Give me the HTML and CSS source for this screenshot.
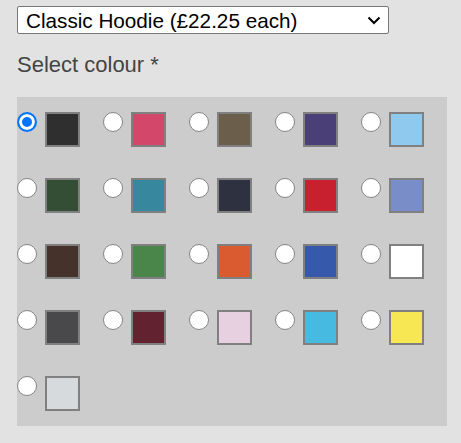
FILE: index.html
```html
<!DOCTYPE html>
<html lang="en">
<head>
<meta charset="utf-8">
<title>Select colour</title>
<link rel="stylesheet" href="styles.css">
</head>
<body>
<form class="product-form">
  <div class="select-wrap">
    <select class="product-select">
      <option>Classic Hoodie (£22.25 each)</option>
    </select>
    <svg class="chevron" width="14" height="9" viewBox="0 0 14 9" aria-hidden="true"><path d="M1.5 1.5 L7 7 L12.5 1.5" fill="none" stroke="#000" stroke-width="2"/></svg>
  </div>
  <p class="field-label">Select colour *</p>
  <div class="colour-grid">
    <label class="colour-item"><input type="radio" name="colour" checked><span class="swatch" style="background:#2f2f2f"></span></label>
    <label class="colour-item"><input type="radio" name="colour"><span class="swatch" style="background:#d3486a"></span></label>
    <label class="colour-item"><input type="radio" name="colour"><span class="swatch" style="background:#6b5e4a"></span></label>
    <label class="colour-item"><input type="radio" name="colour"><span class="swatch" style="background:#4b3f78"></span></label>
    <label class="colour-item"><input type="radio" name="colour"><span class="swatch" style="background:#8fc9ee"></span></label>

    <label class="colour-item"><input type="radio" name="colour"><span class="swatch" style="background:#344d35"></span></label>
    <label class="colour-item"><input type="radio" name="colour"><span class="swatch" style="background:#37889e"></span></label>
    <label class="colour-item"><input type="radio" name="colour"><span class="swatch" style="background:#2e3140"></span></label>
    <label class="colour-item"><input type="radio" name="colour"><span class="swatch" style="background:#c9202f"></span></label>
    <label class="colour-item"><input type="radio" name="colour"><span class="swatch" style="background:#798ec8"></span></label>

    <label class="colour-item"><input type="radio" name="colour"><span class="swatch" style="background:#45322a"></span></label>
    <label class="colour-item"><input type="radio" name="colour"><span class="swatch" style="background:#4a8549"></span></label>
    <label class="colour-item"><input type="radio" name="colour"><span class="swatch" style="background:#da5b2f"></span></label>
    <label class="colour-item"><input type="radio" name="colour"><span class="swatch" style="background:#3659ac"></span></label>
    <label class="colour-item"><input type="radio" name="colour"><span class="swatch" style="background:#ffffff"></span></label>

    <label class="colour-item"><input type="radio" name="colour"><span class="swatch" style="background:#49484b"></span></label>
    <label class="colour-item"><input type="radio" name="colour"><span class="swatch" style="background:#632230"></span></label>
    <label class="colour-item"><input type="radio" name="colour"><span class="swatch" style="background:#e7d1e1"></span></label>
    <label class="colour-item"><input type="radio" name="colour"><span class="swatch" style="background:#46bae0"></span></label>
    <label class="colour-item"><input type="radio" name="colour"><span class="swatch" style="background:#f7e752"></span></label>

    <label class="colour-item"><input type="radio" name="colour"><span class="swatch" style="background:#d6dadd"></span></label>
  </div>
</form>
</body>
</html>
```
FILE: styles.css
```css
html, body {
  margin: 0;
  padding: 0;
  background: #e2e2e2;
}

body {
  font-family: "Liberation Sans", Arial, sans-serif;
}

.product-form {
  padding: 6px 14px 0 17px;
}

.select-wrap {
  position: relative;
  width: 372px;
}

.product-select {
  appearance: none;
  -webkit-appearance: none;
  display: block;
  width: 372px;
  height: 28px;
  margin: 0;
  padding: 1px 30px 0 8px;
  border: 1px solid #767676;
  border-radius: 2px;
  background: #ffffff;
  color: #000;
  font-family: "Liberation Sans", Arial, sans-serif;
  font-size: 20.7px;
  line-height: 25px;
}

.chevron {
  position: absolute;
  right: 8px;
  top: 10px;
  pointer-events: none;
}

.field-label {
  margin: 18px 0 20px;
  font-size: 22px;
  line-height: 25px;
  color: #444;
}

.colour-grid {
  display: grid;
  grid-template-columns: repeat(5, 86px);
  row-gap: 31px;
  padding: 15px 0;
  width: 430px;
  background: #cccccc;
}

.colour-item {
  display: flex;
  align-items: flex-start;
  gap: 8px;
}

.colour-item input {
  appearance: none;
  -webkit-appearance: none;
  box-sizing: border-box;
  width: 20px;
  height: 20px;
  margin: 0;
  border: 1px solid #858585;
  border-radius: 50%;
  background: #fff;
}

.colour-item input:checked {
  border: 2px solid #0075ff;
  background: #0075ff;
  box-shadow: inset 0 0 0 3px #fff;
}

.swatch {
  box-sizing: border-box;
  width: 35px;
  height: 35px;
  border: 2px solid #808080;
}
```
